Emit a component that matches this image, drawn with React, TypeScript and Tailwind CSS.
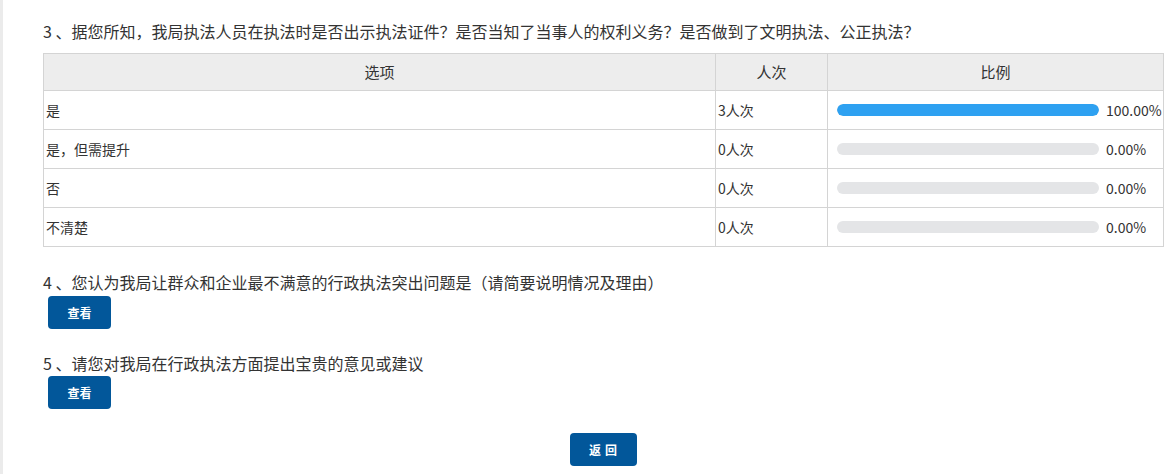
import React from "react";

const rows = [
  { label: "是", count: "3人次", pct: 100, text: "100.00%" },
  { label: "是，但需提升", count: "0人次", pct: 0, text: "0.00%" },
  { label: "否", count: "0人次", pct: 0, text: "0.00%" },
  { label: "不清楚", count: "0人次", pct: 0, text: "0.00%" },
];

const font = { fontFamily: '"Noto Sans CJK SC", "Noto Sans", sans-serif' };

export default function App() {
  return (
    <div className="flex w-[1173px] h-[474px] bg-white text-[#333]" style={font}>
      <div className="w-[3px] shrink-0 bg-[#ebebeb]" />
      <div className="flex-1 pl-[40px] pr-[11px]">
        <div className="mt-[19px] text-[16px] leading-[24px]">
          3 、据您所知，我局执法人员在执法时是否出示执法证件？是否当知了当事人的权利义务？是否做到了文明执法、公正执法？
        </div>
        <table className="mt-[10px] w-[1120px] border-collapse table-fixed">
          <colgroup>
            <col className="w-[672px]" />
            <col className="w-[112px]" />
            <col className="w-[336px]" />
          </colgroup>
          <thead>
            <tr className="h-[37px] bg-[#ededed] text-[15px]">
              <th className="border border-[#d4d4d4] font-normal text-center">选项</th>
              <th className="border border-[#d4d4d4] font-normal text-center">人次</th>
              <th className="border border-[#d4d4d4] font-normal text-center">比例</th>
            </tr>
          </thead>
          <tbody>
            {rows.map((r) => (
              <tr key={r.label} className="h-[39px] text-[14px]">
                <td className="border border-[#d4d4d4] pl-[2px]">{r.label}</td>
                <td className="border border-[#d4d4d4] pl-[2px]">{r.count}</td>
                <td className="border border-[#d4d4d4] pl-[9px]">
                  <div className="flex items-center gap-[7px]">
                    <div className="w-[262px] h-[12px] rounded-full bg-[#e4e5e7] overflow-hidden shrink-0">
                      <div className="h-full rounded-full bg-[#2ea1f1]" style={{ width: `${r.pct}%` }} />
                    </div>
                    <span className="text-[14px] whitespace-nowrap">{r.text}</span>
                  </div>
                </td>
              </tr>
            ))}
          </tbody>
        </table>
        <div className="mt-[24px] text-[16px] leading-[22px]">
          4 、您认为我局让群众和企业最不满意的行政执法突出问题是（请简要说明情况及理由）
        </div>
        <button className="ml-[5px] mt-[3px] w-[63px] h-[33px] rounded-[4px] bg-[#02579a] text-white text-[12px] font-bold block">
          查看
        </button>
        <div className="mt-[23px] text-[16px] leading-[22px]">
          5 、请您对我局在行政执法方面提出宝贵的意见或建议
        </div>
        <button className="ml-[5px] mt-[2px] w-[63px] h-[33px] rounded-[4px] bg-[#02579a] text-white text-[12px] font-bold block">
          查看
        </button>
        <div className="flex justify-center mt-[24px] w-[1120px]">
          <button className="w-[67px] h-[33px] rounded-[4px] bg-[#02579a] text-white text-[12px] font-bold tracking-[4px] pl-[4px]">
            返回
          </button>
        </div>
      </div>
    </div>
  );
}
